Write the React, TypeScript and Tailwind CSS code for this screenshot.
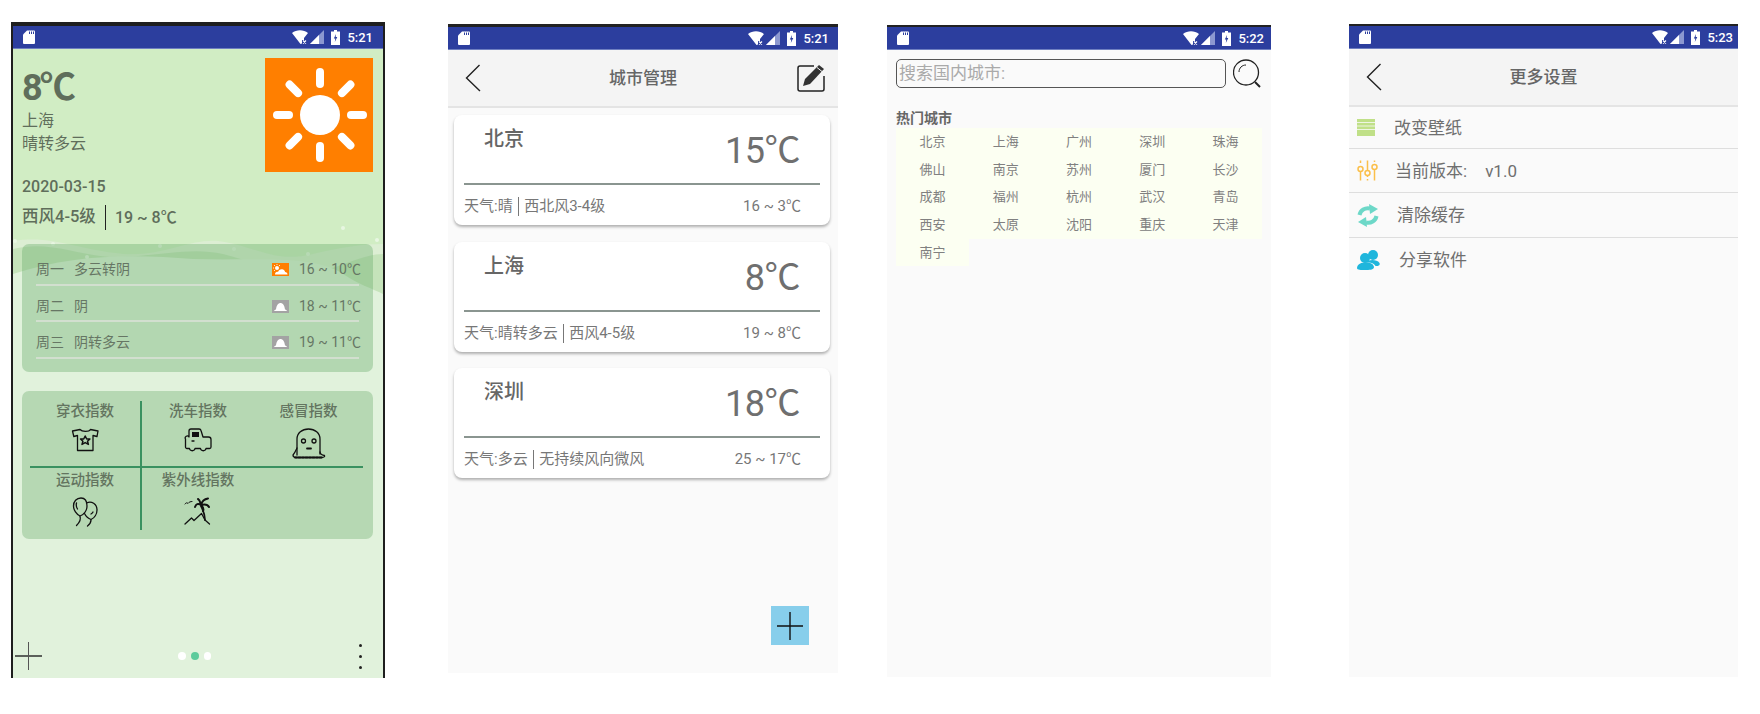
import type { ReactNode } from 'react'

const FORECAST = [
  { day: '周一', desc: '多云转阴', icon: 'sun', temp: '16 ~ 10℃' },
  { day: '周二', desc: '阴', icon: 'cloud', temp: '18 ~ 11℃' },
  { day: '周三', desc: '阴转多云', icon: 'cloud', temp: '19 ~ 11℃' },
]

const CITIES = [
  { name: '北京', temp: '15℃', info: '天气:晴', wind: '西北风3-4级', range: '16 ~ 3℃' },
  { name: '上海', temp: '8℃', info: '天气:晴转多云', wind: '西风4-5级', range: '19 ~ 8℃' },
  { name: '深圳', temp: '18℃', info: '天气:多云', wind: '无持续风向微风', range: '25 ~ 17℃' },
]

const HOT_CITIES = [
  '北京', '上海', '广州', '深圳', '珠海',
  '佛山', '南京', '苏州', '厦门', '长沙',
  '成都', '福州', '杭州', '武汉', '青岛',
  '西安', '太原', '沈阳', '重庆', '天津',
  '南宁',
]

function StatusBar({ time, pad }: { time: string; pad: string }) {
  return (
    <div className={`h-[23px] bg-[#2c3e9e] border-b border-[#6f7fc0] flex items-center justify-between pl-[10px] shrink-0 ${pad}`}>
      <svg width="12" height="14" viewBox="0 0 12 14">
        <path d="M4 0.500H11a1 1 0 0 1 1 1V13a1 1 0 0 1-1 1H1a1 1 0 0 1-1-1V4.500Z" fill="#fff" />
        <path d="M6 1.500h1v2.500H6zM8 1.500h1v2.500H8zM10 1.500h1v2.500h-1z" fill="#2c3e9e" />
      </svg>
      <div className="flex items-center">
        <svg width="16" height="14" viewBox="0 0 16 14">
          <path d="M0 3C4.500 -0.800 11.500 -0.800 16 3L12 8V10H10V13.500L8.500 14Z" fill="#fff" />
          <path d="M11 10.500l3 3M14 10.500l-3 3" stroke="#fff" strokeWidth="1.200" />
        </svg>
        <svg className="ml-[2px]" width="14" height="14" viewBox="0 0 14 14">
          <path d="M0 14L14 0V14Z" fill="#8c98d0" />
          <path d="M0 14L9 5V14Z" fill="#fff" />
        </svg>
        <svg className="ml-[7px]" width="9" height="15" viewBox="0 0 9 15">
          <path d="M3 0H6V1.500H9V15H0V1.500H3Z" fill="#fff" />
          <path d="M5 4L2.800 8.500H4.300L3.800 12L6.300 7H4.700Z" fill="#2c3e9e" />
        </svg>
        <span className="ml-[7px] text-white text-[13px] leading-none font-medium">{time}</span>
      </div>
    </div>
  )
}

function ChevronBack() {
  return (
    <svg width="16" height="28" viewBox="0 0 16 28" fill="none">
      <path d="M14.500 1L1.500 14L15 27" stroke="#222" strokeWidth="1.400" />
    </svg>
  )
}

function SunArt() {
  const rays = [0, 45, 90, 135, 180, 225, 270, 315]
  return (
    <svg width="108" height="114" viewBox="0 0 108 114" className="bg-[#ff7f00] shrink-0">
      <circle cx="55" cy="57" r="20" fill="#fff" />
      {rays.map((deg) => (
        <line
          key={deg}
          x1="55"
          y1="26"
          x2="55"
          y2="14"
          stroke="#fff"
          strokeWidth="8"
          strokeLinecap="round"
          transform={`rotate(${deg} 55 57)`}
        />
      ))}
    </svg>
  )
}

function SmallWeather({ kind }: { kind: string }) {
  if (kind === 'sun') {
    return (
      <svg width="17" height="13" viewBox="0 0 17 13" className="bg-[#ff7f00]">
        <circle cx="5" cy="5" r="2" fill="#fff" />
        <path d="M5 1v1M1 5h1M2 2l1 1M8 2l-1 1M2 8l1-1" stroke="#fff" strokeWidth="0.800" />
        <path d="M3 11.500c0-2 1.500-3 3-2.500c.5-2 3-3.500 5-2.500c1.500.7 2 1.700 2 2.500c1.500 0 2.500 1 2.500 2.500Z" fill="#fff" />
      </svg>
    )
  }
  return (
    <svg width="17" height="13" viewBox="0 0 17 13" className="bg-[#a3a3a3]">
      <path d="M2 11c.5-1 1.500-1.500 2-1.500C4.500 5 6.500 3 8.500 3s4 2 4.500 6.500c.5 0 1.500.5 2 1.500Z" fill="#fff" />
    </svg>
  )
}

function IndexIcon({ kind }: { kind: string }) {
  const line = { fill: 'none', stroke: '#111', strokeWidth: 1.300, strokeLinejoin: 'round' as const, strokeLinecap: 'round' as const }
  if (kind === 'shirt') {
    return (
      <svg width="28" height="24" viewBox="0 0 28 24">
        <path d="M9 1.500L1.500 3L2.800 8.500L6.500 7.500V22.500H22V7.500L26 8.500L27 3L19.500 1.500C18 4 11 4 9 1.500Z" {...line} />
        <path d="M14.200 8l1.500 3h3.200l-2.400 2.200l.9 3.200l-3.200-1.800l-3.200 1.800l.9-3.200L9.500 11h3.200Z" {...line} strokeWidth={1.500} />
      </svg>
    )
  }
  if (kind === 'car') {
    return (
      <svg width="28" height="24" viewBox="0 0 28 24">
        <path d="M5 9V3a2 2 0 0 1 2-2H15a2 2 0 0 1 2 1.500L19 9H24.500A2.500 2.500 0 0 1 27 11.500V19A1.500 1.500 0 0 1 25.500 20.500H22C21.500 23.500 17 23.500 16.500 20.500H11C10.500 23.500 6 23.500 5.500 20.500H3A1.500 1.500 0 0 1 1.500 19V11A2 2 0 0 1 5 9Z" {...line} />
        <rect x="8" y="4" width="7" height="5" fill="#111" />
        <path d="M8 13h2" {...line} />
      </svg>
    )
  }
  if (kind === 'ghost') {
    return (
      <svg width="34" height="31" viewBox="0 0 34 31">
        <path d="M5 27V11C5 5 10 1 16.500 1S28 5 28 11V26" {...line} />
        <path d="M5 20C4 22 3 25 1 27C1 29 2.500 29.500 4 29.500H30C32 29.500 33 28.500 32.500 27.500C30 27 28 26 28 24" {...line} />
        <path d="M3 29.500h28" {...line} strokeWidth={2} strokeDasharray="2 1.500" />
        <circle cx="11.500" cy="13" r="2" {...line} />
        <circle cx="22" cy="13" r="2" {...line} />
        <path d="M15 20.500h4" {...line} strokeWidth={1.800} />
      </svg>
    )
  }
  if (kind === 'balloon') {
    return (
      <svg width="26" height="30" viewBox="0 0 26 30">
        <path d="M9 1C4.500 1 1.500 4.500 1.500 9C1.500 13 4.500 17.500 8 19C12 17.500 15 13.500 15 9C15 4.500 13 1 9 1Z" {...line} />
        <path d="M14.500 6C19.500 3.500 25 7 25 13C25 17 22.500 21 19 22.500C16 21.500 14 19.500 12.500 16.500" {...line} />
        <path d="M4.500 6C4 8 4.500 10.500 5.500 12M21 15c-.5 1-1 1.500-2 2" {...line} />
        <path d="M8 19.500C9 22 8 25 4.500 28.500M19 23C19 25 18 27 15.500 29" {...line} />
      </svg>
    )
  }
  return (
    <svg width="28" height="28" viewBox="0 0 28 28">
      <path d="M1 27L7.500 21L10 23.500L17.500 16.500L21 23L25.500 27" {...line} />
      <path d="M17 9C19 13 21 18 21 23" {...line} strokeWidth={1.800} />
      <path d="M17 8C14 6 12 7 11 10M17 8C16 5 16 3 14 2M17 8C18 4 21 2 24 1.500M17 8C21 7 24 8 25 10M17 8C19 10 20 12 19 14" {...line} strokeWidth={2} />
      <path d="M1 7c1-1.500 2-1.500 3-.5c1-1.500 2.500-2 4-2" {...line} strokeWidth={1} />
    </svg>
  )
}

function IndexCell({ label, icon, divider, top }: { label?: string; icon?: string; divider?: boolean; top?: boolean }) {
  return (
    <div className={`flex flex-col items-center ${divider ? 'border-r-2 border-[#3a9160]' : ''} ${top ? 'pt-[1px]' : 'pt-[3px]'}`}>
      {label && <div className="text-[14.500px] leading-[20px] font-medium text-[#63745f] whitespace-nowrap">{label}</div>}
      {icon && (
        <div className="h-[32px] mt-[6px] flex items-start">
          <IndexIcon kind={icon} />
        </div>
      )}
    </div>
  )
}

function WeatherHome() {
  return (
    <div className="relative flex-1 bg-[#e1f2dc] flex flex-col overflow-hidden">
      {/* 背景の波 */}
      <svg className="absolute left-0 top-0" width="370" height="330" viewBox="0 0 370 330" preserveAspectRatio="none">
        <rect width="370" height="260" fill="#d1edc4" />
        <path d="M0 192C40 186 60 200 110 205C150 208 175 190 205 192C240 196 260 215 300 205C330 198 350 195 370 195V260H0Z" fill="#dceed3" />
        <path d="M0 200C40 190 70 210 110 208C150 206 180 198 210 205C250 215 270 230 300 224C330 218 350 205 370 205V260H0Z" fill="#c5e3ba" />
        <path d="M0 225C60 205 120 205 180 210C240 212 300 205 330 225C345 235 360 240 370 245V330H0Z" fill="#e1f2dc" />
        {[[2, 192], [40, 195], [147, 197], [221, 200], [295, 205], [330, 179], [364, 191], [74, 208], [111, 213]].map(([cx, cy]) => (
          <circle key={`${cx}-${cy}`} cx={cx} cy={cy} r="2" fill="#e8f6e2" />
        ))}
      </svg>

      <div className="relative flex-1 flex flex-col pl-[9px] pr-[10px]">
        <div className="flex justify-between pt-[9px]">
          <div className="text-[#5f6e5b]">
            <div className="mt-[8px] text-[36px] leading-[44px] font-bold tracking-[-3px]">8℃</div>
            <div className="mt-[-1px] text-[16px] leading-[23px]">上海</div>
            <div className="text-[16px] leading-[23px]">晴转多云</div>
            <div className="mt-[21px] text-[16px] leading-[22px] font-medium">2020-03-15</div>
            <div className="mt-[7px] flex items-center text-[16.500px] font-medium">
              <span>西风4-5级</span>
              <span className="mx-[9px] w-[1px] h-[25px] bg-[#222]" />
              <span className="text-[16px]">19 ~ 8℃</span>
            </div>
          </div>
          <SunArt />
        </div>

        <div className="mt-[14px] h-[128px] rounded-[7px] bg-[#6eb070]/40 px-[14px] pt-[5px]">
          {FORECAST.map((row) => (
            <div key={row.day} className="h-[36.500px] pt-[7px] border-b-2 border-[#d2dfcf] flex items-center justify-between text-[#667664] text-[14px]">
              <span>
                {row.day}
                <span className="ml-[10px]">{row.desc}</span>
              </span>
              <span className="flex items-center">
                <SmallWeather kind={row.icon} />
                <span className="ml-[10px] w-[60px] text-right whitespace-nowrap">{row.temp}</span>
              </span>
            </div>
          ))}
        </div>

        <div className="mt-[19px] h-[148px] rounded-[7px] bg-[#b6d8b3] pl-[8px] pr-[10px] pt-[10px]">
          <div className="grid grid-cols-[112px_112px_1fr] h-[67px] border-b-2 border-[#3a9160]">
            <IndexCell label="穿衣指数" icon="shirt" divider top />
            <IndexCell label="洗车指数" icon="car" top />
            <IndexCell label="感冒指数" icon="ghost" top />
          </div>
          <div className="grid grid-cols-[112px_112px_1fr] h-[62px]">
            <IndexCell label="运动指数" icon="balloon" divider />
            <IndexCell label="紫外线指数" icon="island" />
            <IndexCell />
          </div>
        </div>

        <div className="mt-auto mb-[8px] -ml-[7px] -mr-[3px] flex items-center">
          <svg width="27" height="28" viewBox="0 0 27 28">
            <path d="M0 14H27" stroke="#222" strokeWidth="1.400" />
            <path d="M13.500 0V28" stroke="#555" strokeWidth="1" />
          </svg>
          <div className="flex items-center gap-[5px] ml-[136px]">
            <span className="w-[8px] h-[8px] rounded-full bg-white" />
            <span className="w-[8px] h-[8px] rounded-full bg-[#5dcb9c]" />
            <span className="w-[7px] h-[8px] rounded-full bg-white" />
          </div>
          <div className="ml-auto flex flex-col gap-[8px] pr-[14px]">
            <span className="w-[3px] h-[3px] rounded-full bg-[#222]" />
            <span className="w-[3px] h-[3px] rounded-full bg-[#222]" />
            <span className="w-[3px] h-[3px] rounded-full bg-[#222]" />
          </div>
        </div>
      </div>
    </div>
  )
}

function TitleBar({ title, right }: { title: string; right?: ReactNode }) {
  return (
    <div className="relative h-[58px] bg-[#f4f4f4] border-b-2 border-[#e4e4e4] flex items-center justify-between pl-[17px] pr-[12px] shrink-0">
      <ChevronBack />
      <span className="absolute left-0 right-0 mt-[2px] text-center text-[17px] font-medium text-[#666]">{title}</span>
      {right}
    </div>
  )
}

function CityManage() {
  return (
    <div className="flex-1 flex flex-col bg-[#fafafa]">
      <TitleBar
        title="城市管理"
        right={
          <svg width="29" height="28" viewBox="0 0 29 28" fill="none">
            <path d="M17 2H3a2 2 0 0 0-2 2V25a2 2 0 0 0 2 2H25a2 2 0 0 0 2-2V12" stroke="#222" strokeWidth="1.500" />
            <path d="M6 22L8 15L22 1L27 5L13 20Z" fill="#333" />
            <path d="M20 3.500L25 7.500" stroke="#f4f4f4" strokeWidth="1" />
          </svg>
        }
      />
      <div className="flex-1 flex flex-col pl-[6px] pr-[8px] pt-[7px]">
        {CITIES.map((city) => (
          <div key={city.name} className="h-[110px] mb-[16.500px] rounded-[8px] bg-white shadow-[0_2px_3px_rgba(0,0,0,0.3)] px-[10px] flex flex-col">
            <div className="relative h-[70px] border-b-2 border-[#8a9590]">
              <span className="absolute left-[20px] top-[10px] text-[20px] leading-[28px] font-medium text-[#666]">{city.name}</span>
              <span className="absolute right-[20px] top-[14px] text-[36px] leading-[44px] tracking-[-0.500px] text-[#6f6f6f]">{city.temp}</span>
            </div>
            <div className="flex-1 flex items-center justify-between text-[15px] text-[#777] pt-[3px]">
              <span className="flex items-center">
                {city.info}
                <span className="mx-[5px] w-[1.500px] h-[19px] bg-[#777]" />
                {city.wind}
              </span>
              <span className="pr-[19px]">{city.range}</span>
            </div>
          </div>
        ))}
        <div className="mt-auto mb-[28px] mr-[21px] self-end w-[38px] h-[39px] bg-[#87ceeb] flex items-center justify-center">
          <svg width="28" height="28" viewBox="0 0 28 28">
            <path d="M1 14H27M14 0V28" stroke="#111" strokeWidth="1.400" />
          </svg>
        </div>
      </div>
    </div>
  )
}

function CitySearch() {
  return (
    <div className="flex-1 bg-[#fafafa] px-[9px]">
      <div className="mt-[9px] flex items-center">
        <div className="w-[330px] h-[29px] rounded-[5px] border border-[#555] px-[2px] flex items-center text-[17px] text-[#aaa]">搜索国内城市:</div>
        <svg className="ml-[7px]" width="28" height="29" viewBox="0 0 28 29" fill="none">
          <circle cx="13" cy="13.500" r="12.500" stroke="#222" strokeWidth="1.300" />
          <path d="M6 13C6 9 9 6 13 6" stroke="#222" strokeWidth="1" />
          <path d="M22 23L27 28" stroke="#222" strokeWidth="2" />
        </svg>
      </div>
      <div className="mt-[20px] text-[14px] leading-[20px] font-bold text-[#666]">热门城市</div>
      <div className="grid grid-cols-5 w-[366px]">
        {HOT_CITIES.map((city) => (
          <div key={city} className="h-[27.700px] bg-[#fcfff2] flex items-center justify-center text-[13px] text-[#808080]">
            {city}
          </div>
        ))}
      </div>
    </div>
  )
}

function SettingIcon({ kind }: { kind: string }) {
  if (kind === 'stripes') {
    return (
      <svg width="18" height="17" viewBox="0 0 18 17">
        <rect width="18" height="17" fill="#c0e088" />
        <path d="M0 3.500H18M0 7H18M0 10.500H18" stroke="#fafafa" strokeWidth="0.800" />
      </svg>
    )
  }
  if (kind === 'sliders') {
    return (
      <svg width="21" height="21" viewBox="0 0 21 21" fill="none" stroke="#fbbf4a" strokeWidth="1.500">
        <circle cx="3.500" cy="9" r="2.500" />
        <circle cx="10.500" cy="13" r="2.500" />
        <circle cx="17.500" cy="7" r="2.500" />
        <path d="M3.500 0.500V3M3.500 11.500V20.500M10.500 0.500V10.500M10.500 15.500V17M10.500 19V20.500M17.500 0.500V2M17.500 9.500V20.500" />
      </svg>
    )
  }
  if (kind === 'refresh') {
    return (
      <svg width="22" height="23" viewBox="0 0 22 23" fill="#6dd8c8">
        <path d="M2.500 11C3.500 6 8 3.500 13 4.500" fill="none" stroke="#6dd8c8" strokeWidth="4" />
        <path d="M12 0L21 5L13 10Z" />
        <path d="M19.500 12C18.500 17 14 19.500 9 18.500" fill="none" stroke="#6dd8c8" strokeWidth="4" />
        <path d="M10 23L1 18L9 13Z" />
      </svg>
    )
  }
  return (
    <svg width="23" height="20" viewBox="0 0 23 20" fill="#1fb6dc">
      <circle cx="16" cy="5" r="5" />
      <path d="M10 12C11 9.500 20 9 22.500 13C23.500 15 21 16.500 18.500 16C17 13 13 12.500 10 12Z" />
      <circle cx="8" cy="8" r="5" />
      <path d="M0 18C0 11 16 10 17 17C17 20 12 20 8 20C4 20 0 20 0 18Z" />
    </svg>
  )
}

function MoreSettings() {
  const rows = [
    { icon: 'stripes', label: '改变壁纸', h: 'h-[42px]', ml: 'ml-[19px]' },
    { icon: 'sliders', label: '当前版本:', extra: 'v1.0', h: 'h-[44px]', ml: 'ml-[17px]' },
    { icon: 'refresh', label: '清除缓存', h: 'h-[45px]', ml: 'ml-[18px]' },
    { icon: 'users', label: '分享软件', h: 'h-[44px]', ml: 'ml-[19px]' },
  ]
  return (
    <div className="flex-1 flex flex-col bg-[#fafafa]">
      <TitleBar title="更多设置" />
      {rows.map((row, i) => (
        <div
          key={row.label}
          className={`${row.h} ${i < 3 ? 'border-b border-[#dedede]' : ''} pl-[8px] flex items-center text-[17px] text-[#6f6f6f]`}
        >
          <SettingIcon kind={row.icon} />
          <span className={`${row.ml} pt-[2px]`}>{row.label}</span>
          {row.extra && <span className="ml-[18px] pt-[2px]">{row.extra}</span>}
        </div>
      ))}
    </div>
  )
}

function Phone({ className, time, pad, children }: { className: string; time: string; pad: string; children: ReactNode }) {
  return (
    <div className={`flex flex-col shrink-0 ${className}`}>
      <StatusBar time={time} pad={pad} />
      {children}
    </div>
  )
}

export default function App() {
  return (
    <div className="w-[1760px] h-[714px] bg-white flex items-start overflow-hidden font-[Roboto,'Noto_Sans_CJK_SC',sans-serif]">
      <Phone className="ml-[11px] mt-[22px] w-[374px] h-[656px] border-x-2 border-t-4 border-[#1e1e1e]" time="5:21" pad="pr-[10px]">
        <WeatherHome />
      </Phone>
      <Phone className="ml-[63px] mt-[24px] w-[390px] h-[649px] border-t-[3px] border-[#222]" time="5:21" pad="pr-[9px]">
        <CityManage />
      </Phone>
      <Phone className="ml-[49px] mt-[25px] w-[384px] h-[652px] border-t-2 border-[#222]" time="5:22" pad="pr-[7px]">
        <CitySearch />
      </Phone>
      <Phone className="ml-[78px] mt-[24px] w-[389px] h-[653px] border-t-2 border-[#222]" time="5:23" pad="pr-[5px]">
        <MoreSettings />
      </Phone>
    </div>
  )
}
